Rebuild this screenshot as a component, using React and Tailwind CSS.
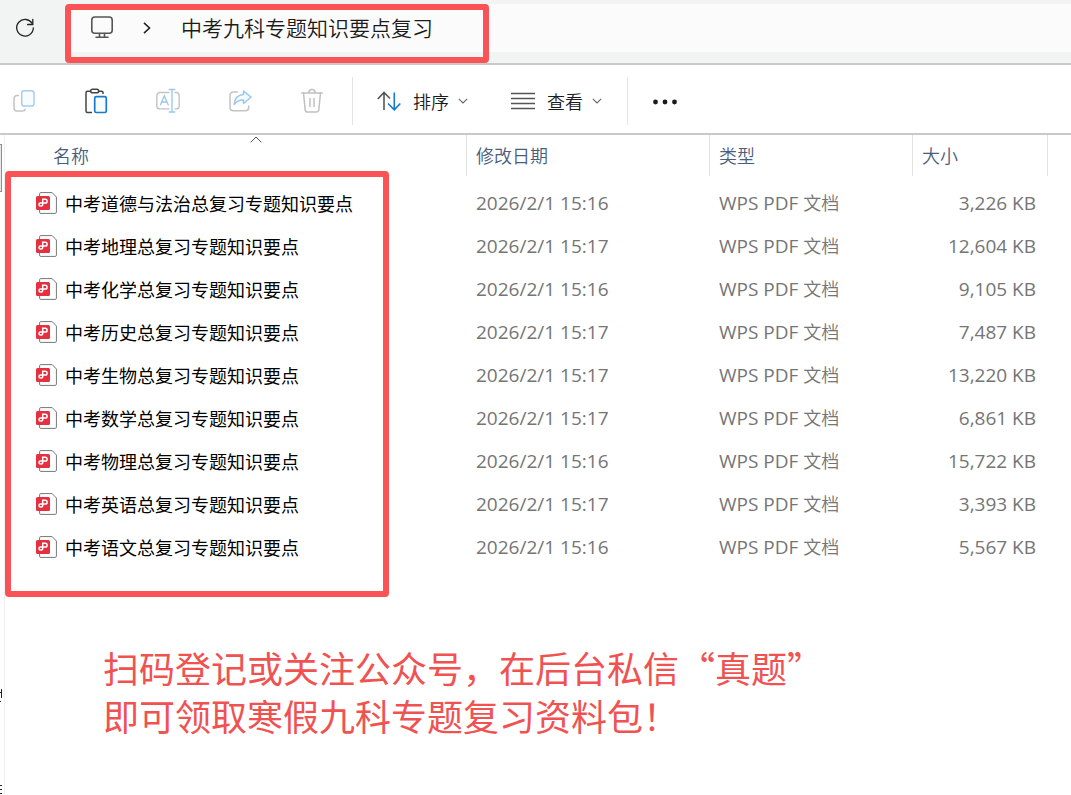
import { useState } from 'react'

const FILES = [
  { name: '中考道德与法治总复习专题知识要点', time: '15:16', size: '3,226 KB' },
  { name: '中考地理总复习专题知识要点', time: '15:17', size: '12,604 KB' },
  { name: '中考化学总复习专题知识要点', time: '15:16', size: '9,105 KB' },
  { name: '中考历史总复习专题知识要点', time: '15:17', size: '7,487 KB' },
  { name: '中考生物总复习专题知识要点', time: '15:17', size: '13,220 KB' },
  { name: '中考数学总复习专题知识要点', time: '15:17', size: '6,861 KB' },
  { name: '中考物理总复习专题知识要点', time: '15:16', size: '15,722 KB' },
  { name: '中考英语总复习专题知识要点', time: '15:17', size: '3,393 KB' },
  { name: '中考语文总复习专题知识要点', time: '15:16', size: '5,567 KB' },
]

export default function App() {
  const [selected, setSelected] = useState(null)

  return (
    <div lang="zh-CN" className="min-h-screen flex flex-col bg-white text-[#1b1b1b] font-['Noto_Sans_CJK_SC',sans-serif] font-[350]">
      <AddressBar />
      <Toolbar />
      <div className="flex flex-1">
        <SidePane />
        <main className="relative flex-1 min-w-0">
          <FileTable selected={selected} onSelect={setSelected} />
          <div className="pointer-events-none absolute left-0 top-[36px] h-[426px] w-[384px] rounded-[4px] border-6 border-[#f95355]" />
          <p className="mt-[75px] ml-[98px] text-4xl leading-12 font-normal text-[#f05252]">
            扫码登记或关注公众号，在后台私信“真题”<br />
            即可领取寒假九科专题复习资料包！
          </p>
        </main>
      </div>
    </div>
  )
}

function AddressBar() {
  return (
    <nav aria-label="地址栏" className="box-content flex h-[59px] border-b-2 border-[#c7caca] bg-[#f2f4f3] pt-1">
      <div className="flex h-12 w-[65px] items-center pl-[15px]">
        <button aria-label="刷新"><RefreshIcon /></button>
      </div>
      <div className="relative flex h-12 flex-1 items-center bg-[#fbfbfb] pl-[25px]">
        <button aria-label="此电脑"><MonitorIcon /></button>
        <svg width="8" height="12" viewBox="0 0 8 12" className="ml-[29px]" fill="none" stroke="#222" strokeWidth="1.6" aria-hidden="true">
          <path d="M1 .8 6.5 6 1 11.2" />
        </svg>
        <a href="#folder" className="ml-[30px] pb-[2px] text-[21px] leading-8">中考九科专题知识要点复习</a>
        <div className="pointer-events-none absolute left-0 top-0 h-[59px] w-[424px] rounded-[4px] border-6 border-[#f95355]" />
      </div>
    </nav>
  )
}

function Toolbar() {
  return (
    <div role="toolbar" aria-label="命令栏" className="box-content flex h-[64px] items-center border-b-2 border-[#c7caca] pt-1 pl-3 text-lg">
      <div className="flex items-center gap-12">
        <button aria-label="复制"><CopyIcon /></button>
        <button aria-label="粘贴"><PasteIcon /></button>
        <button aria-label="重命名"><RenameIcon /></button>
        <button aria-label="共享"><ShareIcon /></button>
        <button aria-label="删除"><TrashIcon /></button>
      </div>
      <div className="ml-7 h-12 w-px bg-[#e4e4e4]" />
      <button className="ml-6 flex items-center">
        <SortIcon />
        <span className="ml-3">排序</span>
        <ChevronDown />
      </button>
      <button className="ml-[43px] flex items-center">
        <ViewIcon />
        <span className="ml-3">查看</span>
        <ChevronDown />
      </button>
      <div className="ml-[25px] h-12 w-px bg-[#e4e4e4]" />
      <button aria-label="更多" className="ml-6">
        <svg width="26" height="24" viewBox="0 0 26 24" fill="#1b1b1b">
          <circle cx="3.5" cy="13" r="2.4" />
          <circle cx="13" cy="13" r="2.4" />
          <circle cx="22.5" cy="13" r="2.4" />
        </svg>
      </button>
    </div>
  )
}

// the navigation pane is collapsed, only its right edge stays visible
function SidePane() {
  return (
    <aside className="w-[5px] shrink-0 border-r border-[#f0f0f3] pt-[9px]">
      <div className="h-12 w-[2px] border border-l-0 border-[#8b8f93] bg-[#e5e7e9]" />
      <svg width="2" height="14" viewBox="0 0 2 14" className="mt-[496px]" stroke="#222" aria-hidden="true">
        <path d="M1.5 1v9M0 4.5h2M0 13.5h1" />
      </svg>
      <svg width="2" height="9" viewBox="0 0 2 9" className="mt-[83px]" stroke="#222" aria-hidden="true">
        <path d="M0 .5h2M0 4.5h2M0 8.5h2" />
      </svg>
    </aside>
  )
}

function FileTable({ selected, onSelect }) {
  return (
    <table className="w-full table-fixed border-collapse text-lg leading-7">
      <colgroup>
        <col />
        <col className="w-[243px]" />
        <col className="w-[203px]" />
        <col className="w-[135px]" />
        <col className="w-[23px]" />
      </colgroup>
      <thead>
        <tr>
          <HeadCell className="pl-12" sorted>名称</HeadCell>
          <HeadCell className="pl-[9px]">修改日期</HeadCell>
          <HeadCell className="pl-[9px]">类型</HeadCell>
          <HeadCell className="pl-[9px]">大小</HeadCell>
          <td />
        </tr>
      </thead>
      <tbody>
        {FILES.map(f => (
          <tr key={f.name} onClick={() => onSelect(f.name)}
              className={`h-[43px] text-[#757575] ${selected === f.name ? 'bg-sky-100' : 'hover:bg-sky-50'}`}>
            <td className="p-0 pl-[31px]">
              <div className="flex items-center gap-2 font-normal text-black">
                <PdfIcon />
                <span className="whitespace-nowrap">{f.name}</span>
              </div>
            </td>
            <td className="p-0 pl-[9px] font-['Open_Sans'] text-[19px] font-normal whitespace-nowrap">2026/2/1 {f.time}</td>
            <td className="p-0 pl-[9px] whitespace-nowrap">
              <span className="font-['Open_Sans'] text-[19px] font-normal">WPS PDF </span>文档
            </td>
            <td className="p-0 pr-3 text-right font-['Open_Sans'] text-[19px] font-normal whitespace-nowrap">{f.size}</td>
            <td />
          </tr>
        ))}
      </tbody>
    </table>
  )
}

function HeadCell({ children, className, sorted }) {
  return (
    <th scope="col" aria-sort={sorted ? 'ascending' : undefined} className="p-0 pb-[5px] text-left font-[350] text-[#4a5d7c]">
      <div className={`relative flex h-[41px] items-center border-r border-[#e2e2e2] pb-[2px] ${className}`}>
        <button>{children}</button>
        {sorted && (
          <svg width="12" height="7" viewBox="0 0 12 7" fill="none" stroke="#555" className="absolute top-px left-[245px]" aria-hidden="true">
            <path d="M.7 6.3 6 1l5.300 5.300" />
          </svg>
        )}
      </div>
    </th>
  )
}

function ChevronDown() {
  return (
    <svg width="10" height="6" viewBox="0 0 10 6" fill="none" stroke="#666" strokeWidth="1.1" className="ml-[9px]" aria-hidden="true">
      <path d="M.8.8 5 5 9.200.8" />
    </svg>
  )
}

function RefreshIcon() {
  return (
    <svg width="20" height="20" viewBox="0 0 20 20" fill="none" stroke="#222" strokeWidth="1.300" strokeLinecap="round">
      <path d="M17.300 5.800A8.300 8.300 0 1 0 18.300 10" />
      <path d="M17.800 1.500v5h-5.200" />
    </svg>
  )
}

function MonitorIcon() {
  return (
    <svg width="24" height="24" viewBox="0 0 24 24" fill="none" stroke="#555" strokeWidth="1.6" strokeLinecap="round">
      <rect x="1.800" y="1" width="20.400" height="16.200" rx="3" />
      <path d="M9.500 17.500v3.500M14.500 17.500v3.500M6 21.300h12" />
    </svg>
  )
}

function CopyIcon() {
  return (
    <svg width="24" height="24" viewBox="0 0 24 24" fill="none" strokeWidth="1.5" strokeLinecap="round">
      <rect x="9.700" y="1.700" width="12.300" height="15.300" rx="2.600" stroke="#a5cdee" fill="#f8fcff" />
      <path d="M6.500 6.500H5A3 3 0 0 0 2 9.500V19a3 3 0 0 0 3 3h5.500a3 3 0 0 0 2.800-1.800" stroke="#c4c4c4" />
    </svg>
  )
}

function PasteIcon() {
  return (
    <svg width="24" height="26" viewBox="0 0 24 26" fill="none" strokeWidth="1.5">
      <path d="M7 3.200H3.500A1.500 1.500 0 0 0 2 4.700V23a1.500 1.500 0 0 0 1.500 1.500H8M15 3.200h2.500A1.500 1.500 0 0 1 19 4.700V6" stroke="#444" />
      <rect x="6.700" y="1.200" width="8" height="3.600" rx="1.800" stroke="#444" />
      <rect x="10.700" y="8.700" width="11.600" height="15.800" rx="1.600" stroke="#1979ca" strokeWidth="1.700" fill="#f5fbff" />
    </svg>
  )
}

function RenameIcon() {
  return (
    <svg width="24" height="26" viewBox="0 0 24 26" fill="none" strokeWidth="1.4" strokeLinecap="round">
      <path d="M13 4.500H4A3.200 3.200 0 0 0 .8 7.700v10A3.200 3.200 0 0 0 4 20.900h9M19 4.500h1a3.200 3.200 0 0 1 3.200 3.200v10a3.200 3.200 0 0 1-3.200 3.200h-1" stroke="#c4c4c4" />
      <path d="M4.500 16.800 8.300 8l3.900 8.800M5.800 14h5.100M16 1.500v22.500M13.200 1.500h5.600M13.200 24h5.600" stroke="#9cc8ee" />
    </svg>
  )
}

function ShareIcon() {
  return (
    <svg width="24" height="24" viewBox="0 0 24 24" fill="none" strokeWidth="1.500" strokeLinejoin="round" strokeLinecap="round">
      <path d="M9.500 3H5.200A3.200 3.200 0 0 0 2 6.200v12.300a3.200 3.200 0 0 0 3.200 3.200h12.300a3.200 3.200 0 0 0 3.200-3.200V17" stroke="#c4c4c4" />
      <path d="M15.500 2 23 8.200l-7.500 6.300V11c-4.500-.2-7 1.300-9.300 4.500C6.600 9.500 10 6 15.500 5.600Z" stroke="#9cc8ee" fill="#f5fbff" />
    </svg>
  )
}

function TrashIcon() {
  return (
    <svg width="24" height="26" viewBox="0 0 24 26" fill="none" stroke="#c0c0c0" strokeWidth="1.500" strokeLinecap="round">
      <path d="M1.800 5h20.400M8.800 4.800a3.200 3.200 0 0 1 6.400 0" />
      <path d="m3.500 5 1.700 16.800a2.500 2.500 0 0 0 2.500 2.300h8.600a2.500 2.500 0 0 0 2.500-2.300L20.500 5M10 10.500v8M14 10.500v8" />
    </svg>
  )
}

function SortIcon() {
  return (
    <svg width="24" height="24" viewBox="0 0 24 24" fill="none" strokeWidth="1.600" aria-hidden="true">
      <path d="M7 21V3.500M.8 10 7 3.500l6 6" stroke="#555" />
      <path d="M17.300 3.500v17.300M11 14.500l6.300 6.300 6-6.300" stroke="#1979ca" />
    </svg>
  )
}

function ViewIcon() {
  return (
    <svg width="24" height="24" viewBox="0 0 24 24" stroke="#555" strokeWidth="1.400" aria-hidden="true">
      <path d="M0 4.500h24M0 9.500h24M0 14.500h24M0 19.500h24" />
    </svg>
  )
}

function PdfIcon() {
  return (
    <svg width="21" height="22" viewBox="0 0 21 22" fill="none" className="shrink-0" aria-hidden="true">
      <path d="M4.800.6h11.400l4.200 4.400v15.200a1.200 1.200 0 0 1-1.200 1.200H4.800a1.200 1.200 0 0 1-1.200-1.200V1.800A1.200 1.200 0 0 1 4.800.6Z" fill="#fff" stroke="#777" />
      <rect y="4" width="14" height="14" rx="1.500" fill="#e6303f" />
      <path d="M6.700 12.500V7.300h2.500a1.900 1.900 0 0 1 0 3.800H4.500a1.500 1.500 0 1 0 0 3c1.400 0 2.200-.5 2.200-1.600" stroke="#fff" strokeWidth="1.500" />
    </svg>
  )
}
